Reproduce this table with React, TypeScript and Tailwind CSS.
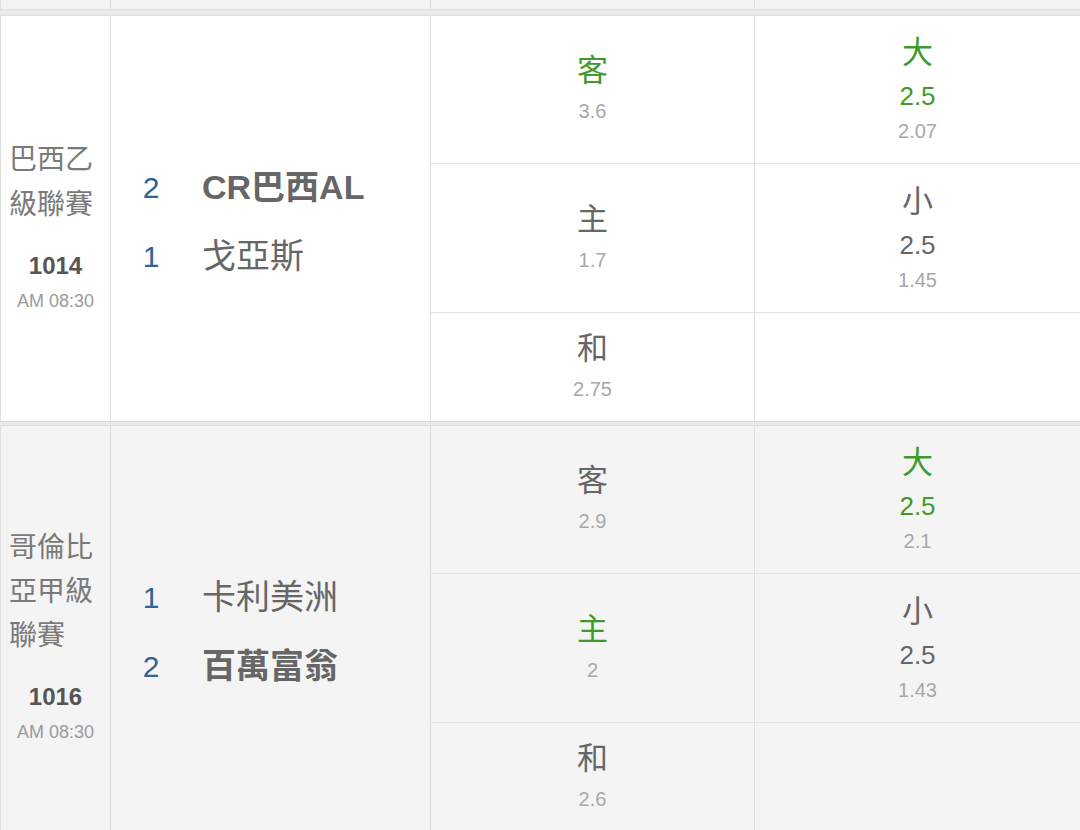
import React from "react";

const LATIN = "font-['Liberation_Sans','Noto_Sans_CJK_TC',sans-serif]";
const GREEN = "text-[#3f9a2c]";

type Team = { num: string; name: string; bold?: boolean };
type Odd = { label: string; odds: string; hl?: boolean };
type OU = { label: string; line: string; odds: string; hl?: boolean };

function OddCell({ o }: { o: Odd }) {
  return (
    <div className="flex flex-col items-center">
      <div className={`text-[31px] leading-[40px] mt-[3px] ${o.hl ? GREEN : "text-[#666]"}`}>{o.label}</div>
      <div className="text-[20px] leading-[40px] text-[#a8a8a8]">{o.odds}</div>
    </div>
  );
}

function OUCell({ o }: { o: OU }) {
  return (
    <div className="flex flex-col items-center">
      <div className={`text-[31px] leading-[40px] ${o.hl ? GREEN : "text-[#666]"}`}>{o.label}</div>
      <div className={`text-[26px] leading-[40px] mt-[3px] ${o.hl ? GREEN : "text-[#666]"}`}>{o.line}</div>
      <div className="text-[20px] leading-[30px] text-[#a8a8a8]">{o.odds}</div>
    </div>
  );
}

function Row({
  bg,
  league,
  tight,
  id,
  time,
  teams,
  odds,
  ou,
}: {
  bg: string;
  league: string[];
  tight?: boolean;
  id: string;
  time: string;
  teams: Team[];
  odds: Odd[];
  ou: OU[];
}) {
  return (
    <div className={`h-[405px] shrink-0 grid grid-cols-[110px_320px_324px_326px] ${bg}`}>
      <div className="border-l border-[#dedede] flex flex-col justify-center pt-[16px]">
        <div className={`pl-[8px] text-[28px] text-[#7a7a7a] ${tight ? "leading-[44px]" : "leading-[45px]"}`}>
          {league.map((l, i) => (
            <div key={i}>{l}</div>
          ))}
        </div>
        <div className="mt-[19px] text-center text-[24px] leading-[40px] font-bold text-[#555]">{id}</div>
        <div className="text-center text-[18px] leading-[30px] text-[#9a9a9a]">{time}</div>
      </div>
      <div className="border-l border-[#dedede] flex flex-col justify-center pt-[7px]">
        {teams.map((t, i) => (
          <div key={i} className="flex items-center h-[69px]">
            <div className="w-[80px] text-center text-[30px] text-[#2e6596]">{t.num}</div>
            <div className={`pl-[11px] text-[34px] text-[#666] ${t.bold ? "font-bold" : ""}`}>{t.name}</div>
          </div>
        ))}
      </div>
      <div className="border-l border-[#dedede] flex flex-col">
        <div className="h-[148px] border-b border-[#e2e2e2] flex items-center justify-center">
          <OddCell o={odds[0]} />
        </div>
        <div className="h-[149px] border-b border-[#e2e2e2] flex items-center justify-center">
          <OddCell o={odds[1]} />
        </div>
        <div className="flex-1 flex items-center justify-center">
          <OddCell o={odds[2]} />
        </div>
      </div>
      <div className="border-l border-[#dedede] flex flex-col">
        <div className="h-[148px] border-b border-[#e2e2e2] flex items-center justify-center">
          <OUCell o={ou[0]} />
        </div>
        <div className="h-[149px] border-b border-[#e2e2e2] flex items-center justify-center">
          <OUCell o={ou[1]} />
        </div>
        <div className="flex-1" />
      </div>
    </div>
  );
}

function Sep({ h }: { h: string }) {
  return <div className={`${h} shrink-0 bg-[#e9e9e9] border-t border-b border-[#dcdcdc]`} />;
}

export default function App() {
  return (
    <div className={`w-[1080px] h-[830px] overflow-hidden flex flex-col bg-white ${LATIN}`}>
      <div className="h-[9px] shrink-0 grid grid-cols-[110px_320px_324px_326px] bg-[#f4f4f4]">
        <div className="border-l border-[#dedede]" />
        <div className="border-l border-[#dedede]" />
        <div className="border-l border-[#dedede]" />
        <div className="border-l border-[#dedede]" />
      </div>
      <Sep h="h-[7px]" />
      <Row
        bg="bg-white"
        league={["巴西乙", "級聯賽"]}
        id="1014"
        time="AM 08:30"
        teams={[
          { num: "2", name: "CR巴西AL", bold: true },
          { num: "1", name: "戈亞斯" },
        ]}
        odds={[
          { label: "客", odds: "3.6", hl: true },
          { label: "主", odds: "1.7" },
          { label: "和", odds: "2.75" },
        ]}
        ou={[
          { label: "大", line: "2.5", odds: "2.07", hl: true },
          { label: "小", line: "2.5", odds: "1.45" },
        ]}
      />
      <Sep h="h-[5px]" />
      <Row
        bg="bg-[#f4f4f4]"
        league={["哥倫比", "亞甲級", "聯賽"]}
        tight
        id="1016"
        time="AM 08:30"
        teams={[
          { num: "1", name: "卡利美洲" },
          { num: "2", name: "百萬富翁", bold: true },
        ]}
        odds={[
          { label: "客", odds: "2.9" },
          { label: "主", odds: "2", hl: true },
          { label: "和", odds: "2.6" },
        ]}
        ou={[
          { label: "大", line: "2.5", odds: "2.1", hl: true },
          { label: "小", line: "2.5", odds: "1.43" },
        ]}
      />
    </div>
  );
}
